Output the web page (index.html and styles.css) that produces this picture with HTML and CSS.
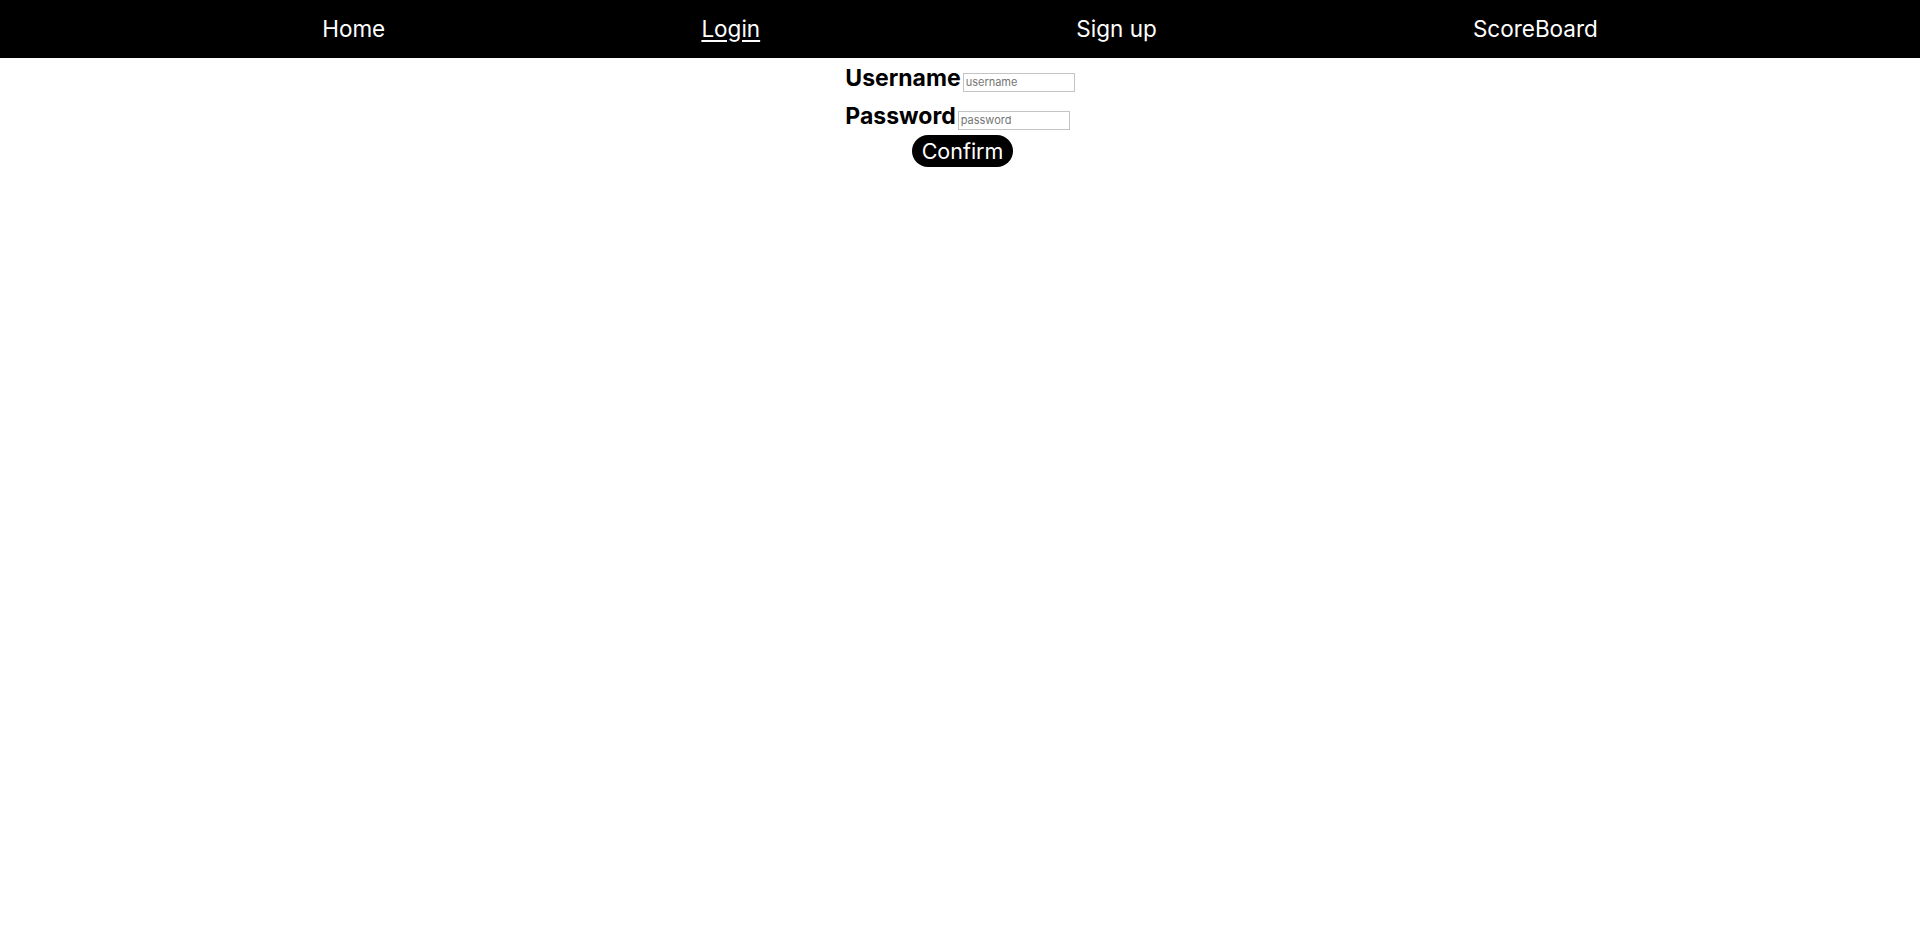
FILE: index.html
```html
<!DOCTYPE html>
<html lang="en">
<head>
<meta charset="utf-8">
<title>Login</title>
<link rel="stylesheet" href="styles.css">
</head>
<body>
<nav class="nav">
  <a class="nav-link" href="#">Home</a>
  <a class="nav-link active" href="#">Login</a>
  <a class="nav-link" href="#">Sign up</a>
  <a class="nav-link" href="#">ScoreBoard</a>
</nav>
<main class="wrap">
  <form class="login">
    <div class="row">
      <label class="label" for="u">Username</label><input class="field" id="u" type="text" placeholder="username">
    </div>
    <div class="row">
      <label class="label" for="p">Password</label><input class="field" id="p" type="password" placeholder="password">
    </div>
    <button class="confirm" type="button">Confirm</button>
  </form>
</main>
</body>
</html>
```
FILE: styles.css
```css
html, body {
  margin: 0;
  padding: 0;
  background: #fff;
}
body {
  font-family: Inter, "Liberation Sans", sans-serif;
  color: #000;
}
.nav {
  background: #000;
  height: 58px;
  padding: 0 6px;
  display: flex;
  justify-content: space-evenly;
  align-items: center;
}
.nav-link {
  color: #fff;
  font-size: 22.5px;
  text-decoration: none;
  margin-top: -2px;
}
.nav-link.active {
  text-decoration: underline;
  text-underline-offset: 3px;
}
.wrap {
  display: flex;
  justify-content: center;
}
.login {
  display: flex;
  flex-direction: column;
  align-items: flex-start;
  padding-top: 6px;
  gap: 10px;
}
.row {
  display: flex;
  align-items: baseline;
  height: 28px;
}
.label {
  font-size: 23px;
  font-weight: 700;
}
.field {
  box-sizing: border-box;
  width: 112px;
  height: 19px;
  margin: 0 0 0 2px;
  padding: 0 2px;
  border: 1px solid #c4c4c4;
  font-family: Inter, "Liberation Sans", sans-serif;
  font-size: 11px;
  outline: none;
}
.field::placeholder {
  color: #757575;
}
.confirm {
  align-self: center;
  margin: -5px 0 0 5px;
  background: #000;
  color: #fff;
  border: none;
  border-radius: 16px;
  height: 32px;
  padding: 0 10px;
  font-family: Inter, "Liberation Sans", sans-serif;
  font-size: 21.5px;
  line-height: 32px;
  cursor: pointer;
}
```
